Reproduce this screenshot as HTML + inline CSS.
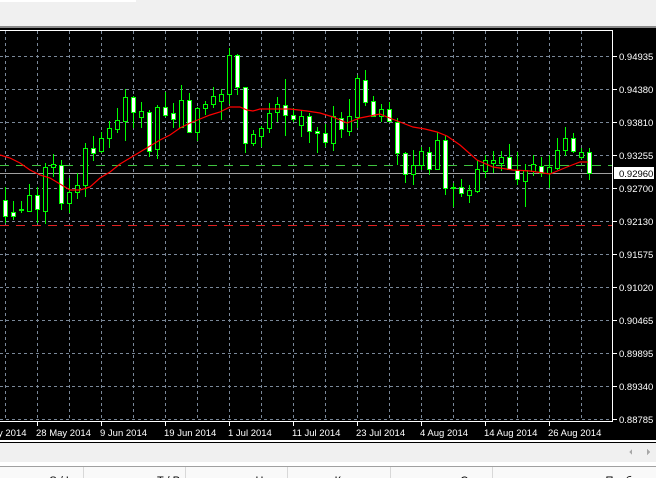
<!DOCTYPE html>
<html><head><meta charset="utf-8"><style>
html,body{margin:0;padding:0;width:656px;height:478px;overflow:hidden;background:#f0f0f0;font-family:"Liberation Sans",sans-serif;}
svg{position:absolute;left:0;top:0}
</style></head><body>
<svg width="656" height="478" xmlns="http://www.w3.org/2000/svg" shape-rendering="crispEdges">
<rect x="0" y="0" width="656" height="27" fill="#f0f0f0"/>
<rect x="0" y="0" width="136" height="2" fill="#ffffff"/>
<rect x="0" y="26" width="656" height="2" fill="#8a8a8a"/>
<rect x="0" y="28" width="656" height="412" fill="#000"/>
<rect x="0" y="440" width="656" height="2" fill="#fff"/>
<rect x="0" y="442" width="656" height="1" fill="#000"/>
<rect x="0" y="443" width="656" height="19" fill="#f0f0f0"/>
<rect x="0" y="462" width="656" height="4" fill="#fff"/>
<rect x="0" y="466" width="656" height="1" fill="#a0a0a0"/>
<rect x="0" y="467" width="656" height="11" fill="#f9f9f9"/>
<g fill="#d8d8d8"><rect x="83" y="467" width="1" height="11"/><rect x="185" y="467" width="1" height="11"/><rect x="287" y="467" width="1" height="11"/><rect x="390" y="467" width="1" height="11"/><rect x="492" y="467" width="1" height="11"/></g>
<g font-size="11" fill="#000" text-anchor="end">
<text x="72" y="484">S / L</text><text x="180" y="484">T / P</text><text x="282" y="484">Цена</text><text x="384" y="484">Комиссия</text><text x="486" y="484">Своп</text><text x="652" y="484">Прибыль</text>
</g>
<path d="M632 449 L629 452 L632 455Z M647 449 L650 452 L647 455Z" fill="#a8a8a8"/>
<g stroke="#7a8899" stroke-width="1" stroke-dasharray="3,3" fill="none">
<path d="M5.5 31V421M37.5 31V421M69.5 31V421M101.5 31V421M133.5 31V421M165.5 31V421M197.5 31V421M229.5 31V421M261.5 31V421M293.5 31V421M325.5 31V421M357.5 31V421M389.5 31V421M421.5 31V421M453.5 31V421M485.5 31V421M517.5 31V421M549.5 31V421M581.5 31V421"/>
<path d="M0 56.5H612M0 89.5H612M0 122.5H612M0 155.5H612M0 188.5H612M0 221.5H612M0 254.5H612M0 287.5H612M0 320.5H612M0 353.5H612M0 386.5H612M0 419.5H612"/>
</g>
<path d="M0 165.5H612" stroke="#3fc43f" stroke-dasharray="9,7"/>
<path d="M0 225.5H612" stroke="#e02020" stroke-dasharray="9,7"/>
<path d="M0 173.5H612" stroke="#a0a0a0"/>
<path d="M0 30.5H612.5V421.5H0" stroke="#fff" fill="none"/>
<g stroke="#fff"><path d="M613 56.5h4M613 89.5h4M613 122.5h4M613 155.5h4M613 188.5h4M613 221.5h4M613 254.5h4M613 287.5h4M613 320.5h4M613 353.5h4M613 386.5h4M613 419.5h4"/>
<path d="M37.5 422v4M101.5 422v4M165.5 422v4M229.5 422v4M293.5 422v4M357.5 422v4M421.5 422v4M485.5 422v4M549.5 422v4"/></g>
<g font-size="9.5" fill="#fff" shape-rendering="auto">
<text x="619" y="60">0.94935</text><text x="619" y="93">0.94380</text><text x="619" y="126">0.93810</text><text x="619" y="159">0.93255</text><text x="619" y="192">0.92700</text><text x="619" y="225">0.92130</text><text x="619" y="258">0.91575</text><text x="619" y="291">0.91020</text><text x="619" y="324">0.90465</text><text x="619" y="357">0.89895</text><text x="619" y="390">0.89340</text><text x="619" y="423">0.88785</text>
<text x="-2" y="436">y 2014</text><text x="36" y="436">28 May 2014</text><text x="100" y="436">9 Jun 2014</text><text x="164" y="436">19 Jun 2014</text><text x="228" y="436">1 Jul 2014</text><text x="292" y="436">11 Jul 2014</text><text x="356" y="436">23 Jul 2014</text><text x="420" y="436">4 Aug 2014</text><text x="484" y="436">14 Aug 2014</text><text x="548" y="436">26 Aug 2014</text>
</g>
<rect x="614" y="167" width="40" height="12" fill="#fff"/>
<text x="619" y="177" font-size="9.5" fill="#000">0.92960</text>
<g stroke="#00ff00" fill="none">
<path d="M5.5 187V223M13.5 201V220M21.5 201V213M29.5 184V211M37.5 187V223M45.5 163V224M53.5 154V177M61.5 160V210M69.5 178V213M77.5 173V199M85.5 143V197M93.5 136V161M101.5 132V153M109.5 121V148M117.5 108V133M125.5 89V141M133.5 96V128M141.5 102V128M149.5 110V157M157.5 105V159M165.5 92V117M173.5 103V128M181.5 85V128M189.5 93V133M197.5 107V141M205.5 101V115M213.5 87V108M221.5 89V120M229.5 48V104M237.5 54V95M245.5 87V153M253.5 130V146M261.5 126V147M269.5 103V133M277.5 97V122M285.5 79V136M293.5 108V122M301.5 110V137M309.5 113V143M317.5 127V153M325.5 124V147M333.5 106V151M341.5 112V138M349.5 99V136M357.5 75V128M365.5 70V106M373.5 96V117M381.5 104V122M389.5 102V122M397.5 118V165M405.5 152V183M413.5 150V185M421.5 147V170M429.5 147V175M437.5 132V170M445.5 135V195M453.5 183V207M461.5 179V197M469.5 185V203M477.5 160V193M485.5 155V178M493.5 151V173M501.5 151V171M509.5 144V170M517.5 152V185M525.5 164V207M533.5 155V176M541.5 157V177M549.5 155V188M557.5 138V170M565.5 127V156M573.5 133V153M581.5 148V159M589.5 148V180"/>
</g>
<g stroke="#00ff00" stroke-width="1">
<g fill="#fff">
<rect x="3.5" y="200.5" width="4" height="16"/><rect x="11.5" y="212.5" width="4" height="4"/><rect x="35.5" y="195.5" width="4" height="14"/><rect x="59.5" y="165.5" width="4" height="38"/><rect x="91.5" y="148.5" width="4" height="5"/><rect x="131.5" y="97.5" width="4" height="15"/><rect x="147.5" y="112.5" width="4" height="39"/><rect x="163.5" y="107.5" width="4" height="8"/><rect x="171.5" y="113.5" width="4" height="6"/><rect x="187.5" y="100.5" width="4" height="32"/><rect x="235.5" y="55.5" width="4" height="32"/><rect x="243.5" y="87.5" width="4" height="56"/><rect x="283.5" y="105.5" width="4" height="10"/><rect x="291.5" y="115.5" width="4" height="4"/><rect x="307.5" y="116.5" width="4" height="15"/><rect x="315.5" y="131.5" width="4" height="2"/><rect x="323.5" y="133.5" width="4" height="9"/><rect x="339.5" y="118.5" width="4" height="11"/><rect x="363.5" y="80.5" width="4" height="22"/><rect x="371.5" y="101.5" width="4" height="15"/><rect x="387.5" y="109.5" width="4" height="12"/><rect x="395.5" y="122.5" width="4" height="31"/><rect x="403.5" y="153.5" width="4" height="21"/><rect x="427.5" y="152.5" width="4" height="17"/><rect x="443.5" y="140.5" width="4" height="48"/><rect x="459.5" y="187.5" width="4" height="6"/><rect x="507.5" y="157.5" width="4" height="12"/><rect x="515.5" y="170.5" width="4" height="9"/><rect x="539.5" y="166.5" width="4" height="7"/><rect x="571.5" y="138.5" width="4" height="13"/><rect x="587.5" y="152.5" width="4" height="21"/>
</g>
<g fill="#000">
<rect x="19.5" y="209.5" width="4" height="1"/><rect x="27.5" y="195.5" width="4" height="16"/><rect x="43.5" y="167.5" width="4" height="44"/><rect x="51.5" y="164.5" width="4" height="3"/><rect x="67.5" y="192.5" width="4" height="11"/><rect x="75.5" y="185.5" width="4" height="7"/><rect x="83.5" y="148.5" width="4" height="37"/><rect x="99.5" y="138.5" width="4" height="13"/><rect x="107.5" y="128.5" width="4" height="10"/><rect x="115.5" y="120.5" width="4" height="9"/><rect x="123.5" y="97.5" width="4" height="24"/><rect x="139.5" y="111.5" width="4" height="6"/><rect x="155.5" y="107.5" width="4" height="42"/><rect x="179.5" y="100.5" width="4" height="27"/><rect x="195.5" y="108.5" width="4" height="24"/><rect x="203.5" y="104.5" width="4" height="4"/><rect x="211.5" y="96.5" width="4" height="8"/><rect x="219.5" y="94.5" width="4" height="7"/><rect x="227.5" y="55.5" width="4" height="39"/><rect x="251.5" y="134.5" width="4" height="9"/><rect x="259.5" y="128.5" width="4" height="8"/><rect x="267.5" y="113.5" width="4" height="15"/><rect x="275.5" y="104.5" width="4" height="8"/><rect x="299.5" y="116.5" width="4" height="9"/><rect x="331.5" y="116.5" width="4" height="27"/><rect x="347.5" y="116.5" width="4" height="15"/><rect x="355.5" y="78.5" width="4" height="39"/><rect x="379.5" y="109.5" width="4" height="7"/><rect x="411.5" y="165.5" width="4" height="9"/><rect x="419.5" y="151.5" width="4" height="14"/><rect x="435.5" y="140.5" width="4" height="29"/><rect x="451.5" y="187.5" width="4" height="1"/><rect x="467.5" y="190.5" width="4" height="5"/><rect x="475.5" y="169.5" width="4" height="22"/><rect x="483.5" y="160.5" width="4" height="11"/><rect x="491.5" y="160.5" width="4" height="3"/><rect x="499.5" y="157.5" width="4" height="6"/><rect x="523.5" y="170.5" width="4" height="11"/><rect x="531.5" y="164.5" width="4" height="7"/><rect x="547.5" y="167.5" width="4" height="6"/><rect x="555.5" y="150.5" width="4" height="18"/><rect x="563.5" y="138.5" width="4" height="12"/><rect x="579.5" y="152.5" width="4" height="5"/>
</g>
</g>
<polyline shape-rendering="auto" fill="none" stroke="#ff0000" stroke-width="1.2" points="0,155 10,158 20,163 30,170 40,175 50,178 60,184 70,190 80,190 90,187 100,178 110,172 120,164 130,158 140,152 150,146 160,140 170,135 180,128 190,123 200,119 210,115 220,112 230,107 240,107 247,110 253,111 260,109 290,109 307,111 320,113 333,117 347,123 360,118 370,116 380,114 387,117 400,122 413,127 425,129 437,132 447,136 460,145 477,160 493,167 513,170 530,171 550,174 567,167 580,162 588,162"/>
</svg>
</body></html>
